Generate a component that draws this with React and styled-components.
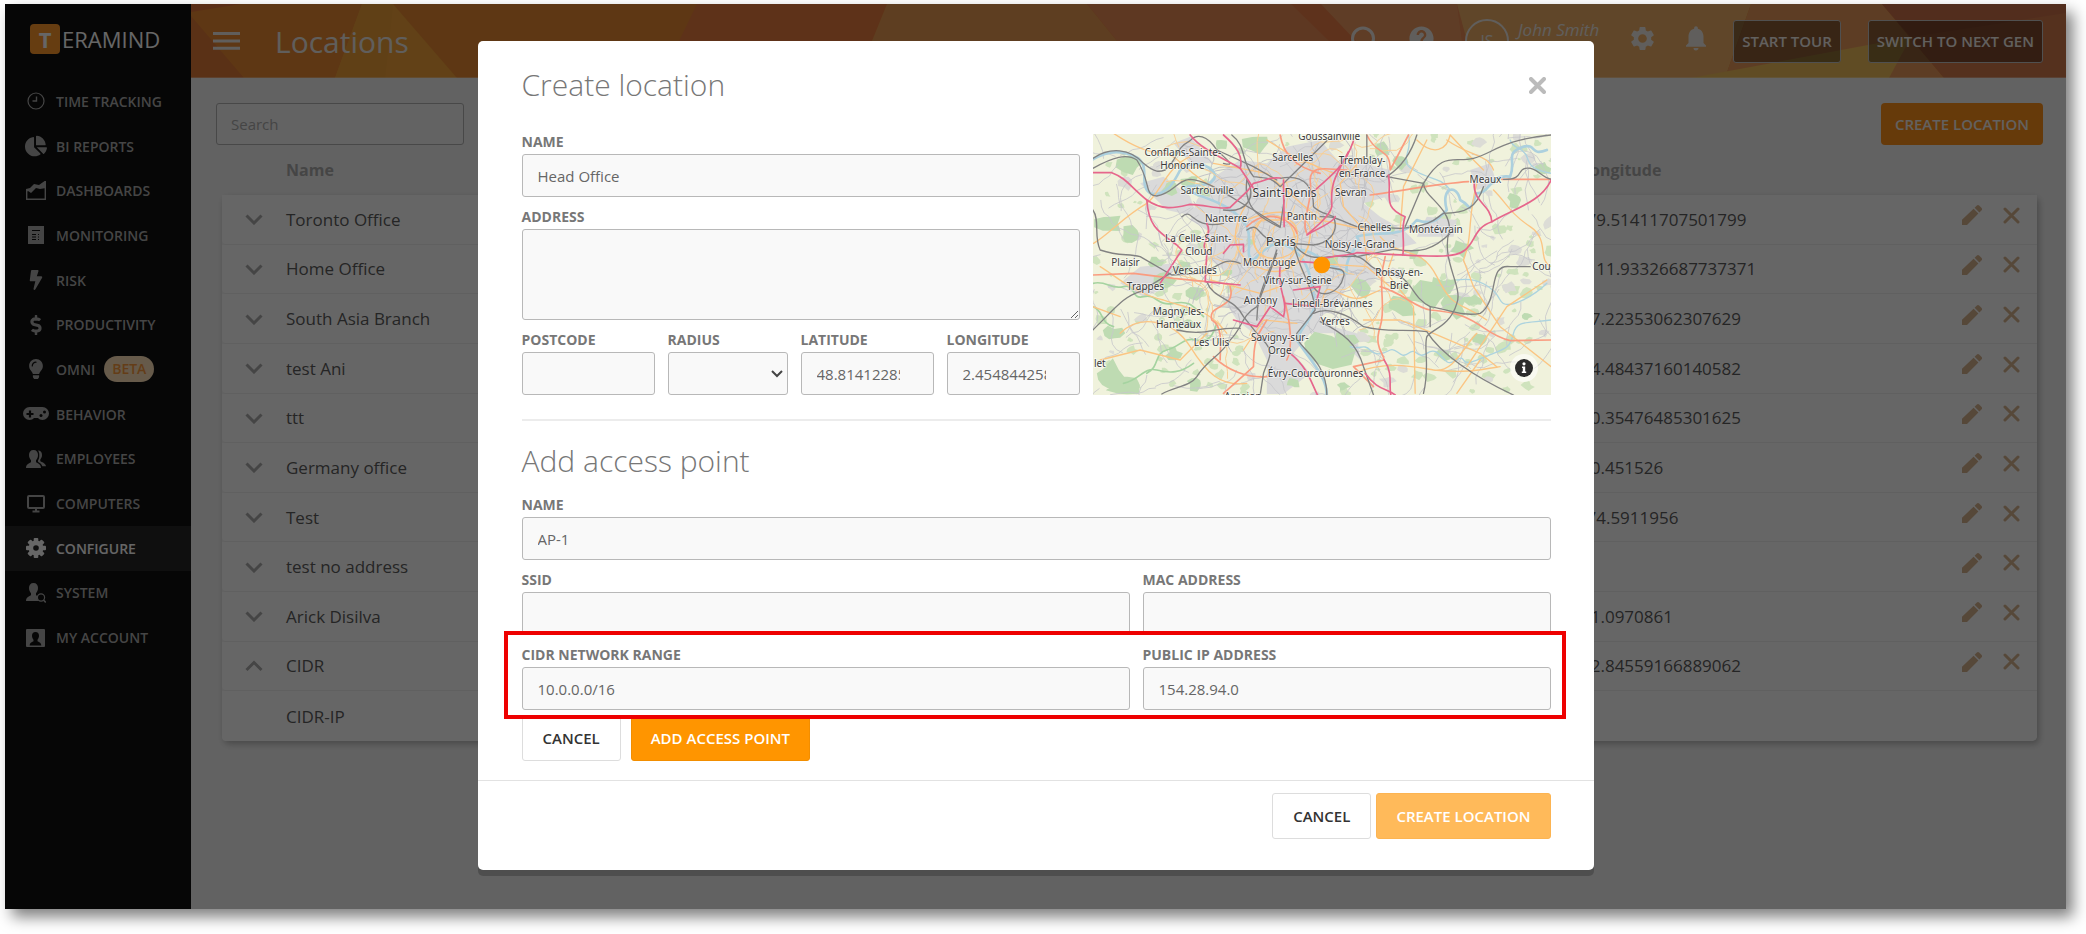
import React from 'react';
import styled, { createGlobalStyle, css } from 'styled-components';
import { FaBolt, FaChartPie, FaDollarSign, FaLightbulb } from 'react-icons/fa';
import { MdHelp, MdNotifications, MdSettings } from 'react-icons/md';

const GlobalStyle = createGlobalStyle`
	*, *::before, *::after {
		box-sizing: border-box;
	}

	body {
		margin: 0;
		background: #fff;
		font-family: 'Open Sans', 'Noto Sans', sans-serif;
		font-size: 15px;
	}

	button, input, textarea, select {
		font-family: inherit;
		font-size: inherit;
		margin: 0;
	}
`;

/* ---------- icons ---------- */

const ClockIcon = () => (
	<svg width="18" height="18" viewBox="0 0 18 18" fill="none" stroke="currentColor">
		<circle cx="9" cy="9" r="8" strokeWidth="1.2" />
		<path d="M9.5 4.5V9H5.5" strokeWidth="1.4" />
	</svg>
);

const AreaChartIcon = () => (
	<svg width="20" height="20" viewBox="0 0 20 20" fill="currentColor">
		<path d="M0 8l4-1 4-4 5 1 7-5v8l-6 1-4-1-5 5-3-2-2 1z" />
		<path d="M.7 8v10.3h18.6V3" fill="none" stroke="currentColor" strokeWidth="1.4" />
	</svg>
);

const ReportIcon = () => (
	<svg width="16" height="18" viewBox="0 0 16 18">
		<rect width="16" height="18" fill="currentColor" />
		<path d="M4 4.5h8M4 8.5h4M10 8.5h1M4 11h4M10 11h1M4 13.5h4M10 13.5h1" stroke="#0f0f0f" strokeWidth="1" />
	</svg>
);

const GamepadIcon = () => (
	<svg width="26" height="14" viewBox="0 0 26 14">
		<path d="M6.5 0h13a6.5 6.5 0 0 1 0 13c-2 0-3.5-1-4.5-2h-4c-1 1-2.5 2-4.5 2a6.5 6.5 0 0 1 0-13z" fill="currentColor" />
		<path d="M7 3.5v7M3.5 7h7" stroke="#0f0f0f" strokeWidth="2.2" />
		<circle cx="18" cy="8.5" r="1.5" fill="#0f0f0f" />
		<circle cx="21.5" cy="5" r="1.5" fill="#0f0f0f" />
	</svg>
);

const bust = 'M7.5 0c3 0 4.500 2 4.500 5 0 2.500-1 4-2 5.200v2c1.500 1 5 1.600 5 5.800H0c0-4.200 3.500-4.800 5-5.800v-2C4 9 3 7.500 3 5c0-3 1.500-5 4.500-5z';

const PeopleIcon = () => (
	<svg width="20" height="18" viewBox="0 0 20 18" fill="currentColor">
		<path d={bust} />
		<path d="M12 .6c2.7 0 4 1.8 4 4.4 0 2-.7 3.4-1.7 4.500v1.700c1.300 1 5.200 1.600 5.700 5h-3.700c-.8-2.700-3.300-3.400-4.300-4.400V10.500C13 9 13.300 7.500 13.300 5c0-1.800-.4-3.300-1.300-4.400z" />
	</svg>
);

const MonitorIcon = () => (
	<svg width="18" height="18" viewBox="0 0 18 18" fill="none" stroke="currentColor">
		<rect x="1" y="1" width="16" height="12" rx="1" strokeWidth="2" />
		<path d="M9 13v3M5.500 16.500h7" strokeWidth="2" />
	</svg>
);

const GearIcon = () => (
	<svg width="20" height="20" viewBox="0 0 20 20">
		<g fill="currentColor">
			{[0, 45, 90, 135].map((angle) => (
				<rect key={angle} x="7.7" y="0" width="4.6" height="20" rx="1" transform={`rotate(${angle} 10 10)`} />
			))}
			<circle cx="10" cy="10" r="7.4" />
		</g>
		<circle cx="10" cy="10" r="2.8" fill="#272727" />
	</svg>
);

const UserSearchIcon = () => (
	<svg width="20" height="20" viewBox="0 0 20 20">
		<path d={bust} fill="currentColor" />
		<circle cx="15" cy="14.5" r="3.6" fill="#0f0f0f" stroke="currentColor" strokeWidth="1.2" />
		<path d="M17.5 17l2.2 2.4" stroke="currentColor" strokeWidth="1.5" />
	</svg>
);

const AccountIcon = () => (
	<svg width="19" height="18" viewBox="0 0 19 18">
		<rect width="19" height="18" rx="1" fill="currentColor" />
		<path d="M9.500 3c2.300 0 3.500 1.500 3.500 3.800 0 1.900-.8 3-1.500 3.900v1.600c1.200.8 3.800 1.200 3.800 4.200H3.700c0-3 2.600-3.400 3.800-4.200v-1.600C6.800 9.800 6 8.700 6 6.800 6 4.500 7.200 3 9.500 3z" fill="#0f0f0f" />
	</svg>
);

const MenuIcon = () => (
	<svg width="27" height="18" viewBox="0 0 27 18" stroke="currentColor" strokeWidth="3">
		<path d="M0 1.5h27M0 8.9h27M0 16.3h27" />
	</svg>
);

const SearchIcon = () => (
	<svg width="32" height="29" viewBox="0 0 32 29" fill="none" stroke="currentColor" strokeWidth="3">
		<circle cx="12" cy="14.5" r="10.5" />
		<path d="M20 21l7 7" />
	</svg>
);

const Chevron = ({ up }) => (
	<svg width="18" height="12" viewBox="0 0 18 12" fill="none" stroke="currentColor" strokeWidth="3">
		<path d={up ? 'M1.5 10L9 2.5l7.5 7.5' : 'M1.5 2.5L9 10l7.5-7.5'} />
	</svg>
);

const PencilIcon = () => (
	<svg width="20" height="20" viewBox="0 0 20 20" fill="currentColor">
		<path d="M0 20v-5.200L11.600 3.700l4.800 4.800L5 20z" />
		<path d="M12.600 2.800l2-2a2 2 0 0 1 2.800 0l2 2a2 2 0 0 1 0 2.800l-2 2z" />
	</svg>
);

const CrossIcon = ({ weight = 3 }) => (
	<svg width="17" height="17" viewBox="0 0 17 17" fill="none" stroke="currentColor" strokeWidth={weight} strokeLinecap="round">
		<path d="M2 2l13 13M15 2L2 15" />
	</svg>
);

/* ---------- frame ---------- */

const Page = styled.div`
	padding: 4px 20px 25px 5px;
`;

const Frame = styled.div`
	position: relative;
	display: flex;
	min-height: calc(100vh - 29px);
	background: #f5f5f5;
	box-shadow: 7px 8px 14px rgba(0, 0, 0, 0.5);
`;

const Sidebar = styled.aside`
	flex: none;
	width: 186px;
	background: #0f0f0f;
`;

const Logo = styled.div`
	display: flex;
	align-items: center;
	gap: 2px;
	height: 75px;
	padding: 0 0 5px 25px;
	color: #fff;
	font-size: 22px;
`;

const LogoMark = styled.span`
	display: flex;
	align-items: center;
	justify-content: center;
	width: 30px;
	height: 30px;
	border-radius: 4px;
	background: #ff9a2b;
	font-weight: 700;
`;

const Nav = styled.nav`
	display: grid;
	grid-auto-rows: 1fr;
	height: 581px;
`;

const NavLink = styled.a`
	display: flex;
	align-items: center;
	gap: 5px;
	padding-left: 15px;
	color: #adadad;
	font-size: 14px;
	font-weight: 600;
	text-decoration: none;
	${({ $active }) => $active && css`
		background: #272727;
		color: #fff;
	`}
`;

const NavIcon = styled.span`
	display: flex;
	justify-content: center;
	width: 31px;
`;

const BetaTag = styled.span`
	margin-left: 4px;
	padding: 0 8px;
	border-radius: 13px;
	background: #ffe1b9;
	color: #fb9a3c;
	line-height: 26px;
`;

const Content = styled.div`
	flex: 1;
	min-width: 0;
`;

/* ---------- top bar ---------- */

const TopBar = styled.header`
	position: relative;
	display: flex;
	align-items: center;
	height: 74px;
	padding: 0 23px 0 22px;
	color: #f0ebe6;
	overflow: hidden;
`;

const TopBarArt = styled.svg`
	position: absolute;
	inset: 0;
	width: 100%;
	height: 100%;
`;

const PageTitle = styled.h1`
	position: relative;
	margin: 0 auto 0 35px;
	font-size: 30px;
	font-weight: 400;
`;

const BareButton = styled.button`
	position: relative;
	display: flex;
	align-items: center;
	justify-content: center;
	padding: 0;
	border: 0;
	background: none;
	color: inherit;
	cursor: pointer;
`;

const Tools = styled.div`
	position: relative;
	display: flex;
	align-items: center;
	gap: 24px;
	height: 74px;
	margin-right: -5px;
	padding-bottom: 6px;
`;

const User = styled.div`
	display: flex;
	align-items: center;
	gap: 9px;
	margin: 0 5px;
	font-style: italic;
	font-size: 17px;
`;

const Avatar = styled.span`
	display: flex;
	align-items: center;
	justify-content: center;
	width: 44px;
	height: 44px;
	margin-top: 6px;
	border: 2px solid currentColor;
	border-radius: 50%;
	font-style: normal;
	font-size: 16px;
`;

const UserName = styled.span`
	padding-bottom: 18px;
`;

const OutlineButton = styled.button`
	position: relative;
	height: 43px;
	margin-left: 27px;
	padding: 0 8px;
	border: 1px solid #c8c8c8;
	border-radius: 3px;
	background: rgba(0, 0, 0, 0.4);
	color: #f4f0ec;
	font-size: 15px;
	font-weight: 600;
`;

/* ---------- locations list ---------- */

const Main = styled.main`
	padding: 25px 23px 0 25px;
`;

const ListBar = styled.div`
	display: flex;
	justify-content: space-between;
`;

const SearchBox = styled.input`
	width: 248px;
	height: 42px;
	padding: 0 14px;
	border: 1px solid #b4b4b4;
	border-radius: 3px;
	background: #f7f7f7;
	&::placeholder {
		color: #adadad;
	}
`;

const PrimaryButton = styled.button`
	height: 42px;
	padding: 0 14px;
	border: 0;
	border-radius: 4px;
	background: #ff9119;
	color: #f7f2ee;
	font-weight: 600;
`;

const LocationTable = styled.table`
	width: calc(100% - 12px);
	height: 596px;
	margin: 0 6px;
	table-layout: fixed;
	border-spacing: 0;
	color: #5c5c5c;
	font-size: 17px;

	th, td {
		padding: 0;
		text-align: left;
	}

	th {
		height: 50px;
		color: #adadad;
		font-size: 16px;
	}

	tbody {
		border-radius: 5px;
		box-shadow: 2px 3px 6px rgba(0, 0, 0, 0.25);
	}

	td {
		height: 49px;
		background: #fff;
	}

	tr:not(:last-child) > td {
		border-bottom: 1px solid #f0f0f0;
	}

	td:first-child {
		border-bottom-left-radius: 4px;
	}

	tr:last-child > td:last-child {
		border-bottom-right-radius: 5px;
	}
`;

const ToggleCol = styled.col`
	width: 64px;
`;

const LongitudeCol = styled.col`
	width: 346px;
`;

const ActionsCol = styled.col`
	width: 110px;
`;

const Toggle = styled(BareButton)`
	width: 64px;
	color: #adadad;
`;

const RowActions = styled.div`
	display: flex;
	align-items: center;
	gap: 21px;
	padding: 0 0 8px 35px;
	color: #d8b490;
`;

/* ---------- modal ---------- */

const Overlay = styled.div`
	position: absolute;
	inset: 0;
	padding-top: 37px;
	background: rgba(0, 0, 0, 0.6);
`;

const Modal = styled.section`
	width: 100%;
	max-width: 1116px;
	margin: 0 auto;
	border-radius: 5px;
	background: #fff;
	box-shadow: 0 6px 0 rgba(0, 0, 0, 0.2);
`;

const ModalBody = styled.div`
	padding: 24px 43px 19px 44px;
`;

const ModalHeader = styled.div`
	display: flex;
	align-items: center;
	justify-content: space-between;
	margin-bottom: 29px;
`;

const ModalTitle = styled.h2`
	margin: 0;
	color: #777;
	font-size: 30px;
	font-weight: 300;
	line-height: 40px;
`;

const SectionTitle = styled(ModalTitle)`
	padding-bottom: 4px;
`;

const CloseButton = styled(BareButton)`
	padding: 5px;
	color: #bbb;
`;

const Columns = styled.div`
	position: relative;
	display: grid;
	grid-template-columns: ${({ $columns }) => $columns || '1fr'};
	gap: 12px 13px;
`;

const Highlight = styled(Columns)`
	&::after {
		content: '';
		position: absolute;
		inset: -16px -15px -9px -18px;
		border: 4px solid #ee0000;
		pointer-events: none;
	}
`;

const Stack = styled.div`
	display: flex;
	flex-direction: column;
	gap: 12px;
	min-width: 0;
`;

const Label = styled.label`
	display: flex;
	flex-direction: column;
	gap: 4px;
	min-width: 0;
	color: #777;
	font-size: 14px;
	font-weight: 700;
	line-height: 16px;
`;

const control = css`
	width: 100%;
	height: 43px;
	padding: 0 15px;
	border: 1px solid #b8b8b8;
	border-radius: 3px;
	background: #f9f9f9;
	color: #666;
	font-size: 15px;
	font-weight: 400;
`;

const Input = styled.input`
	${control}
	${({ $stepper }) => $stepper && css`
		padding-right: 33px;
	`}
`;

const TextArea = styled.textarea`
	${control}
	display: block;
	height: 91px;
	padding: 10px 15px;
	resize: vertical;
`;

const SelectWrap = styled.span`
	position: relative;
	display: block;

	svg {
		position: absolute;
		top: 18px;
		right: 5px;
		pointer-events: none;
	}
`;

const Select = styled.select`
	${control}
	display: block;
	appearance: none;
`;

const Divider = styled.hr`
	height: 2px;
	margin: 24px 0 20px;
	border: 0;
	background: #ececec;
`;

const Buttons = styled.div`
	display: flex;
	gap: 10px;
	padding-top: 5px;
`;

const Button = styled.button`
	height: 46px;
	padding: 0 20px;
	border: 1px solid #ddd;
	border-radius: 3px;
	background: #fff;
	color: #333;
	font-weight: 600;
	${({ $primary }) => $primary && css`
		padding: 0 19px;
		border-color: #f28e00;
		background: #ff9500;
		color: #fff;
	`}
	&:disabled {
		border-color: #fcb452;
		background: #ffba5a;
	}
`;

const ModalFooter = styled.footer`
	display: flex;
	justify-content: flex-end;
	gap: 5px;
	padding: 12px 43px 31px;
	border-top: 1px solid #e2e2e2;
`;

const Field = ({ label, ...rest }) => (
	<Label>
		{label}
		<Input {...rest} />
	</Label>
);

/* ---------- map ---------- */

const MapBox = styled.div`
	position: relative;
	min-height: 261px;
	overflow: hidden;
`;

const MapCanvas = styled.svg`
	position: absolute;
	inset: 0;
	width: 100%;
	height: 100%;
	font-family: 'Noto Sans', sans-serif;
`;

const MapInfo = styled.button`
	position: absolute;
	right: 13px;
	bottom: 13px;
	display: flex;
	padding: 5px;
	border: 0;
	border-radius: 50%;
	background: rgba(255, 255, 255, 0.6);
`;

// small deterministic generator, so the ground texture is the same on each render
const makeRandom = (seed) => () => {
	seed = (seed * 16807) % 2147483647;
	return seed / 2147483647;
};

const rand = makeRandom(4711);

const blob = (cx, cy, size) => {
	const points = Array.from({ length: 9 }, (_, i) => {
		const r = size * (0.5 + rand() * 0.7);
		const a = (i / 9) * Math.PI * 2;
		return `${Math.round(cx + Math.cos(a) * r * 1.3)} ${Math.round(cy + Math.sin(a) * r)}`;
	});
	return `M${points.join('L')}z`;
};

const groves = Array.from({ length: 260 }, () => blob(38 + rand() * 1375, 42 + rand() * 783, 4 + rand() * 13)).join('');
const towns = Array.from({ length: 75 }, () => blob(38 + rand() * 1375, 42 + rand() * 783, 6 + rand() * 16)).join('');

const lane = (x, y, steps, reach) => {
	let a = rand() * Math.PI * 2;
	let d = `M${Math.round(x)} ${Math.round(y)}`;
	for (let i = 0; i < steps; i += 1) {
		a += (rand() - 0.5) * 1.1;
		d += `l${Math.round(Math.cos(a) * reach)} ${Math.round(Math.sin(a) * reach)}`;
	}
	return d;
};

const lanes = Array.from({ length: 190 }, () => lane(38 + rand() * 1375, 42 + rand() * 783, 7, 20)).join('');
const cityLanes = Array.from({ length: 110 }, () => lane(380 + rand() * 480, 110 + rand() * 530, 6, 17)).join('');
const yellowLanes = Array.from({ length: 46 }, () => lane(250 + rand() * 640, 60 + rand() * 640, 9, 20)).join('');

const forests = [
	[150, 130, 30], [270, 205, 22], [330, 185, 22], [85, 310, 34], [150, 345, 26], [420, 75, 18], [530, 70, 34],
	[365, 215, 20], [255, 480, 26], [310, 440, 24], [225, 425, 18], [345, 520, 24], [100, 640, 24], [85, 770, 50],
	[135, 795, 40], [280, 700, 20], [330, 610, 16], [345, 790, 24], [745, 690, 62], [790, 665, 36], [850, 505, 30],
	[960, 555, 40], [1050, 520, 46], [1085, 505, 40], [1120, 560, 34], [1000, 400, 16], [1145, 385, 26],
	[1180, 540, 20], [905, 90, 24], [960, 130, 22], [935, 325, 12], [755, 420, 18], [510, 365, 13], [1305, 240, 24],
	[1390, 145, 18], [1090, 705, 22], [1200, 660, 20], [1340, 590, 12], [640, 790, 16], [790, 800, 14], [440, 460, 14]
].map(([x, y, size]) => blob(x, y, size)).join('');

const urban = [
	'M395 175L480 120L560 130L620 80L720 60L780 130L850 130L930 150L920 230L850 250L900 290L970 330L1010 370L930 390L850 400L900 470L800 500L770 560L720 590L760 620L830 640L840 720L760 640L690 640L640 700L690 760L610 822L560 822L560 720L520 640L470 600L430 540L480 490L430 450L390 420L380 330L330 300L350 240z',
	'M180 190L250 170L330 230L350 290L260 270L220 230z',
	'M180 440L280 430L270 500L190 530L120 490z',
	'M1170 150L1230 130L1250 190L1190 210z',
	'M1040 290L1130 300L1120 350L1010 350z',
	'M280 70L330 50L400 130L330 130z'
];

const water = 'M38 118C90 88 130 92 170 112C215 140 170 200 215 222C260 225 280 190 300 150C330 120 390 130 405 165C400 215 300 185 320 210C380 240 460 250 500 320C520 370 490 410 520 420C560 380 590 350 640 390C680 420 690 460 700 520C720 580 660 620 650 660C690 720 740 770 740 825M640 390C700 380 740 440 800 460C790 400 850 380 830 350C900 330 960 360 1010 300C1060 320 1080 290 1100 270C1080 200 1130 190 1140 240C1180 260 1160 290 1190 220C1230 220 1230 160 1290 170C1310 120 1270 100 1330 80C1370 70 1350 110 1400 90';

const creeks = 'M810 680C840 690 850 670 870 690S910 700 930 690S960 720 985 700S1010 720 1040 700S1080 710 1100 725S1140 700 1150 720S1200 715 1240 700S1290 680 1300 640S1340 610 1413 600M985 45C1000 100 950 120 1000 150S1080 170 1110 210M1290 60C1300 90 1330 80 1340 110S1360 150 1413 160M1130 480C1190 470 1240 500 1260 540S1370 520 1400 490';

// regional park limits
const parks = 'M38 490C80 480 90 510 130 500S150 540 190 530S230 560 280 550S340 560 370 590M200 760C240 740 220 700 260 690S310 650 350 660S400 640 410 610M130 790C180 780 190 740 230 750S300 760 340 730M38 560C70 570 60 610 100 620';

const pinkRoads = [
	'M38 158L95 158C140 175 150 200 200 240C250 275 290 262 330 253C380 255 420 270 450 262L500 215L520 190C570 180 560 170 600 174',
	'M200 240C205 320 235 335 290 375L305 390L240 490',
	'M330 45C365 90 440 120 480 145L520 205',
	'M430 45C470 80 490 110 480 145',
	'M820 62C790 150 745 170 700 215',
	'M805 95C765 170 750 190 755 260C745 300 680 340 680 345C700 330 760 310 765 290',
	'M925 165C935 230 905 260 975 290C960 330 975 355 968 405',
	'M660 425L705 428C730 405 800 410 830 398C900 400 1000 410 1090 408C1200 405 1160 330 1235 305C1300 265 1380 250 1413 180',
	'M1235 305C1230 250 1180 250 1182 190',
	'M380 310C400 350 355 365 380 400L375 485L480 495',
	'M600 440C590 510 625 540 610 590L570 560L530 620L460 600',
	'M640 510L720 500L705 560L615 550',
	'M630 700C680 740 690 780 712 825',
	'M855 760C890 810 920 805 945 825',
	'M912 720C940 760 925 800 932 825',
	'M610 180L612 320M430 400L450 375L490 373L490 395'
];

const orangeRoads = [
	'M38 465L160 460L280 475L380 485',
	'M400 710C440 750 500 775 560 770',
	'M430 820L520 740C520 640 540 640 560 600',
	'M450 500C470 570 380 550 395 600C430 620 420 680 420 720',
	'M870 225C980 210 1080 190 1165 185M1265 178L1413 178',
	'M860 45C890 110 930 80 930 150L985 45',
	'M915 410C890 500 920 560 900 620C880 680 910 700 912 720L820 740L880 800',
	'M900 500C970 520 1000 560 1050 570C1200 580 1200 640 1290 662L1413 660',
	'M680 340C660 300 700 250 690 180C690 130 750 150 800 150',
	'M600 45C610 100 640 140 720 160M500 320C560 260 640 300 650 340',
	'M610 530C630 600 640 680 620 720'
];

const yellowRoads = [
	'M40 370C90 340 130 290 200 250C240 220 260 140 330 110',
	'M100 40C160 80 210 100 250 100S330 170 400 200',
	'M60 440C110 470 160 520 250 540C330 570 380 560 440 640',
	'M120 640C180 580 280 600 330 680S420 800 500 790',
	'M500 250C450 330 450 400 530 440S680 430 690 350S590 260 500 300',
	'M545 300C500 350 520 420 590 425S660 350 620 300z',
	'M520 330C540 270 640 280 650 330S640 410 590 415S510 380 520 330z',
	'M1010 60C1060 110 1100 90 1110 45L1180 120L1210 150',
	'M1100 60C1170 110 1220 100 1240 150M1190 190C1160 300 1180 340 1150 420L1180 500L1260 620L1413 740',
	'M900 350C960 420 1020 370 1070 470S1130 540 1220 600M940 400L920 460L1000 560L1005 820',
	'M820 760C920 720 1000 740 1060 750S1150 680 1190 640M1260 740C1200 750 1150 760 1060 750',
	'M1240 210C1280 250 1290 280 1350 320S1370 420 1413 440M850 600L960 600L1060 640L1200 700L1250 740',
	'M720 560C740 520 720 490 780 520S850 530 900 510M700 430L860 440L930 500',
	'M490 690L550 600L650 610M400 130L560 160L640 230L720 300L860 330',
	'M560 60L640 110L760 160M850 110L780 190L790 260L850 330L860 420',
	'M38 560L120 590M60 720L180 690L300 720L380 640M390 480L540 520L600 500',
	'M1160 740L1280 560L1400 480M1130 820L1200 720M1040 60L970 200L960 330'
];

const rails = [
	'M38 115C90 80 150 85 190 130C225 160 240 155 255 150C300 110 280 90 330 62C350 40 380 45 410 90L520 140L590 180',
	'M38 145C100 110 140 100 170 120C215 190 190 225 230 228C280 220 290 180 330 178C380 180 440 225 520 270L600 320',
	'M455 45C500 80 480 120 520 170C560 175 570 170 600 200L740 62',
	'M860 45L860 110M1010 45C990 110 950 150 920 170',
	'M500 180C490 260 530 290 600 322L612 240M600 175C680 160 700 210 700 260C720 280 740 280 760 290C780 340 740 370 700 375L630 370',
	'M920 170L1030 190C1030 230 1110 260 1108 330C1080 420 1150 500 1130 550C1110 620 1050 630 1040 650C1030 680 1050 740 1030 820',
	'M1030 190C1090 90 1120 130 1180 115S1260 60 1413 45M1030 190L975 320',
	'M720 290C780 290 770 300 830 320L960 325C1060 320 1070 290 1090 280C1160 280 1190 260 1210 200',
	'M1270 178C1330 180 1310 150 1335 145C1370 140 1380 170 1413 178',
	'M640 370C690 440 740 400 800 410C870 400 850 450 920 455C1000 470 990 530 1050 560L1050 620',
	'M1050 560C1110 570 1150 590 1200 580C1260 540 1220 430 1290 440L1350 440',
	'M760 375C740 400 790 380 830 410L940 388C1020 400 1060 390 1110 340',
	'M38 270C60 300 40 350 60 390C120 410 140 400 180 410L275 465L360 460C420 440 430 410 480 430',
	'M38 630C110 560 130 530 180 515L270 460M245 822C280 800 330 800 350 770C380 720 420 710 450 660C490 620 480 590 530 560L590 400',
	'M290 630C380 650 400 620 480 625M380 485C400 540 460 530 490 590L530 640C590 700 570 700 550 760L540 825',
	'M590 390C560 480 530 520 530 600M640 370C660 460 700 500 705 570L650 640C640 680 740 710 740 825',
	'M700 500C720 540 780 520 790 470C800 440 760 450 740 440M700 580C740 560 800 580 850 620C930 640 960 625 1040 635C1080 700 1180 770 1300 825',
	'M720 605C790 640 830 670 850 740L880 825M305 290C340 260 330 330 430 310M500 330C540 300 530 360 600 370',
	'M410 90C440 120 470 140 430 130M430 270C500 280 530 230 500 180'
];

const places = [
	['Goussainville', 747, 60, 30], ['Conflans-Sainte-', 308, 107, 30], ['Honorine', 307, 147, 30],
	['Sarcelles', 638, 123, 30], ['Tremblay-', 846, 132, 30], ['en-France', 846, 172, 30], ['Meaux', 1216, 190, 30],
	['Sartrouville', 381, 221, 30], ['Saint-Denis', 613, 232, 36], ['Sevran', 812, 227, 30],
	['Nanterre', 438, 306, 30], ['Pantin', 665, 299, 30], ['Chelles', 883, 332, 30], ['Montévrain', 1067, 339, 30],
	['La Celle-Saint-', 354, 365, 30], ['Cloud', 356, 405, 30], ['Paris', 602, 377, 39],
	['Noisy-le-Grand', 839, 383, 30], ['Plaisir', 136, 438, 30], ['Versailles', 344, 463, 30],
	['Montrouge', 568, 437, 30], ['Roissy-en-', 957, 467, 30], ['Brie', 957, 507, 30], ['Cou', 1384, 449, 30],
	['Trappes', 196, 511, 30], ['Vitry-sur-Seine', 652, 492, 30], ['Antony', 541, 552, 30],
	['Limeil-Brévannes', 756, 560, 30], ['Magny-les-', 295, 584, 30], ['Hameaux', 295, 624, 30],
	['Yerres', 765, 616, 30], ['Savigny-sur-', 599, 663, 30], ['Orge', 599, 703, 30], ['Les Ulis', 394, 678, 30],
	['let', 59, 742, 30], ['Évry-Courcouronnes', 706, 771, 30], ['Arpajon', 488, 840, 30]
];

const LocationMap = () => (
	<MapBox>
		<MapCanvas viewBox="38 42 1375 783" preserveAspectRatio="xMidYMid slice" role="img" aria-label="Map">
			<rect x="0" y="0" width="1450" height="870" fill="#f0f2dc" />
			<path d={groves} fill="#cfe3bd" />
			<path d={towns} fill="#dcdcd6" />
			{urban.map((d) => <path key={d} d={d} fill="#dadada" />)}
			<path d={forests} fill="#bedbb2" />
			<g fill="none" strokeLinejoin="round" strokeLinecap="round">
				<path d={lanes} stroke="#c8c8cb" strokeWidth="2.5" />
				<path d={cityLanes} stroke="#c3c3c7" strokeWidth="3" />
				<path d={parks} stroke="#a5d3a0" strokeWidth="5" />
				<path d={creeks} stroke="#acd3df" strokeWidth="4" />
				<path d={water} stroke="#acd0de" strokeWidth="8" />
				<path d={yellowLanes} stroke="#f9cf95" strokeWidth="3" />
				{yellowRoads.map((d) => <path key={d} d={d} stroke="#fbc583" strokeWidth="4" />)}
				{orangeRoads.map((d) => <path key={d} d={d} stroke="#fa9c80" strokeWidth="5" />)}
				{rails.map((d) => <path key={d} d={d} stroke="#828282" strokeWidth="4" />)}
				{pinkRoads.map((d) => <path key={d} d={d} stroke="#e6668c" strokeWidth="5" />)}
			</g>
			<g textAnchor="middle" fill="#3c3c3c" stroke="#fff" strokeOpacity="0.6" strokeWidth="5" paintOrder="stroke">
				{places.map(([name, x, y, size]) => (
					<text key={name} x={x} y={y} fontSize={size}>{name}</text>
				))}
			</g>
			<circle cx="725" cy="435" r="25" fill="#ff9500" />
		</MapCanvas>
		<MapInfo type="button" aria-label="Map attribution">
			<svg width="18" height="18" viewBox="0 0 18 18">
				<circle cx="9" cy="9" r="9" fill="#2b2b2b" />
				<circle cx="9" cy="4.8" r="1.6" fill="#fff" />
				<path d="M7 7.5h3.2v5h1V14H6.8v-1.5h1V9H7z" fill="#fff" />
			</svg>
		</MapInfo>
	</MapBox>
);

/* ---------- data ---------- */

const navItems = [
	{ label: 'TIME TRACKING', icon: <ClockIcon /> },
	{ label: 'BI REPORTS', icon: <FaChartPie size={22} /> },
	{ label: 'DASHBOARDS', icon: <AreaChartIcon /> },
	{ label: 'MONITORING', icon: <ReportIcon /> },
	{ label: 'RISK', icon: <FaBolt size={20} /> },
	{ label: 'PRODUCTIVITY', icon: <FaDollarSign size={20} /> },
	{ label: 'OMNI', icon: <FaLightbulb size={20} />, beta: true },
	{ label: 'BEHAVIOR', icon: <GamepadIcon /> },
	{ label: 'EMPLOYEES', icon: <PeopleIcon /> },
	{ label: 'COMPUTERS', icon: <MonitorIcon /> },
	{ label: 'CONFIGURE', icon: <GearIcon />, active: true },
	{ label: 'SYSTEM', icon: <UserSearchIcon /> },
	{ label: 'MY ACCOUNT', icon: <AccountIcon /> }
];

const locations = [
	{ name: 'Toronto Office', longitude: '-79.51411707501799' },
	{ name: 'Home Office', longitude: '-111.93326687737371' },
	{ name: 'South Asia Branch', longitude: '77.22353062307629' },
	{ name: 'test Ani', longitude: '44.48437160140582' },
	{ name: 'ttt', longitude: '30.35476485301625' },
	{ name: 'Germany office', longitude: '10.451526' },
	{ name: 'Test', longitude: '-74.5911956' },
	{ name: 'test no address', longitude: '' },
	{ name: 'Arick Disilva', longitude: '11.0970861' },
	{ name: 'CIDR', longitude: '12.84559166889062', open: true }
];

const TopBarBackground = () => (
	<TopBarArt viewBox="0 0 1875 74" preserveAspectRatio="none" aria-hidden="true">
		<rect width="1875" height="74" fill="#eb8a32" />
		<path d="M0 0h50L0 8z" fill="#e2733a" />
		<path d="M0 12L53 74H0z" fill="#e27a38" />
		<path d="M171 0h31l64 74H144z" fill="#f4a33a" />
		<path d="M171 0h31l-8 74h-50z" fill="#f0a038" />
		<path d="M506 0h190l-30 74H470z" fill="#eb7d40" />
		<path d="M696 0h200l60 74H666z" fill="#eb9c54" />
		<path d="M896 0h370l30 74H956z" fill="#ec8c56" />
		<path d="M1100 0h166l10 74h-100z" fill="#ea7e48" />
		<path d="M1130 0h136l10 74H1200z" fill="#ee9a60" />
		<path d="M1266 0h294l-26 74h-248z" fill="#efb066" />
		<path d="M1560 0h131l62 74h-219z" fill="#e99a5a" />
		<path d="M1500 74L1720 33l-22 41z" fill="#f0bd5a" />
		<path d="M1691 0h184v74h-122z" fill="#d57a4c" />
		<path d="M1691 0h184v9l-155 24z" fill="#cc724a" />
		<rect y="73" width="1875" height="1" fill="#fff" fillOpacity="0.3" />
	</TopBarArt>
);

const LocationRow = ({ name, longitude, open }) => (
	<tr>
		<td>
			<Toggle type="button" aria-label={`Toggle ${name}`} aria-expanded={!!open}><Chevron up={open} /></Toggle>
		</td>
		<td>{name}</td>
		<td>{longitude}</td>
		<td>
			<RowActions>
				<BareButton type="button" aria-label={`Edit ${name}`}><PencilIcon /></BareButton>
				<BareButton type="button" aria-label={`Delete ${name}`}><CrossIcon weight={3} /></BareButton>
			</RowActions>
		</td>
	</tr>
);

const CreateLocation = () => (
	<Overlay>
		<Modal role="dialog" aria-label="Create location">
			<ModalBody>
				<ModalHeader>
					<ModalTitle>Create location</ModalTitle>
					<CloseButton type="button" aria-label="Close"><CrossIcon weight={4} /></CloseButton>
				</ModalHeader>
				<Columns $columns="558fr 458fr">
					<Stack>
						<Field label="NAME" defaultValue="Head Office" />
						<Label>
							ADDRESS
							<TextArea />
						</Label>
						<Columns $columns="133fr 120fr 133fr 133fr">
							<Field label="POSTCODE" />
							<Label>
								RADIUS
								<SelectWrap>
									<Select defaultValue="">
										<option value="" />
									</Select>
									<svg width="12" height="8" viewBox="0 0 12 8" fill="none" stroke="#444" strokeWidth="2">
										<path d="M1 1l5 5 5-5" />
									</svg>
								</SelectWrap>
							</Label>
							<Field label="LATITUDE" $stepper inputMode="decimal" defaultValue="48.81412285" />
							<Field label="LONGITUDE" $stepper inputMode="decimal" defaultValue="2.454844258" />
						</Columns>
					</Stack>
					<LocationMap />
				</Columns>
				<Divider />
				<Stack>
					<SectionTitle as="h3">Add access point</SectionTitle>
					<Field label="NAME" defaultValue="AP-1" />
					<Columns $columns="608fr 408fr">
						<Field label="SSID" />
						<Field label="MAC ADDRESS" />
					</Columns>
					<Highlight $columns="608fr 408fr">
						<Field label="CIDR NETWORK RANGE" defaultValue="10.0.0.0/16" />
						<Field label="PUBLIC IP ADDRESS" defaultValue="154.28.94.0" />
					</Highlight>
				</Stack>
				<Buttons>
					<Button type="button">CANCEL</Button>
					<Button type="button" $primary>ADD ACCESS POINT</Button>
				</Buttons>
			</ModalBody>
			<ModalFooter>
				<Button type="button">CANCEL</Button>
				<Button type="button" $primary disabled>CREATE LOCATION</Button>
			</ModalFooter>
		</Modal>
	</Overlay>
);

const App = () => (
	<Page>
		<GlobalStyle />
		<Frame>
			<Sidebar>
				<Logo><LogoMark>T</LogoMark>ERAMIND</Logo>
				<Nav>
					{navItems.map(({ label, icon, active, beta }) => (
						<NavLink key={label} href="#" $active={active}>
							<NavIcon>{icon}</NavIcon>
							{label}
							{beta && <BetaTag>BETA</BetaTag>}
						</NavLink>
					))}
				</Nav>
			</Sidebar>
			<Content>
				<TopBar>
					<TopBarBackground />
					<BareButton type="button" aria-label="Menu"><MenuIcon /></BareButton>
					<PageTitle>Locations</PageTitle>
					<Tools>
						<BareButton type="button" aria-label="Search"><SearchIcon /></BareButton>
						<BareButton type="button" aria-label="Help"><MdHelp size={29} /></BareButton>
						<User>
							<Avatar>JS</Avatar>
							<UserName>John Smith</UserName>
						</User>
						<BareButton type="button" aria-label="Settings"><MdSettings size={29} /></BareButton>
						<BareButton type="button" aria-label="Notifications"><MdNotifications size={30} /></BareButton>
					</Tools>
					<OutlineButton type="button">START TOUR</OutlineButton>
					<OutlineButton type="button">SWITCH TO NEXT GEN</OutlineButton>
				</TopBar>
				<Main>
					<ListBar>
						<SearchBox type="search" placeholder="Search" aria-label="Search" />
						<PrimaryButton type="button">CREATE LOCATION</PrimaryButton>
					</ListBar>
					<LocationTable>
						<colgroup>
							<ToggleCol />
							<col />
							<LongitudeCol />
							<ActionsCol />
						</colgroup>
						<thead>
							<tr>
								<th />
								<th>Name</th>
								<th>Longitude</th>
								<th />
							</tr>
						</thead>
						<tbody>
							{locations.map((location) => <LocationRow key={location.name} {...location} />)}
							<tr>
								<td />
								<td>CIDR-IP</td>
								<td />
								<td />
							</tr>
						</tbody>
					</LocationTable>
				</Main>
			</Content>
			<CreateLocation />
		</Frame>
	</Page>
);

export default App;
